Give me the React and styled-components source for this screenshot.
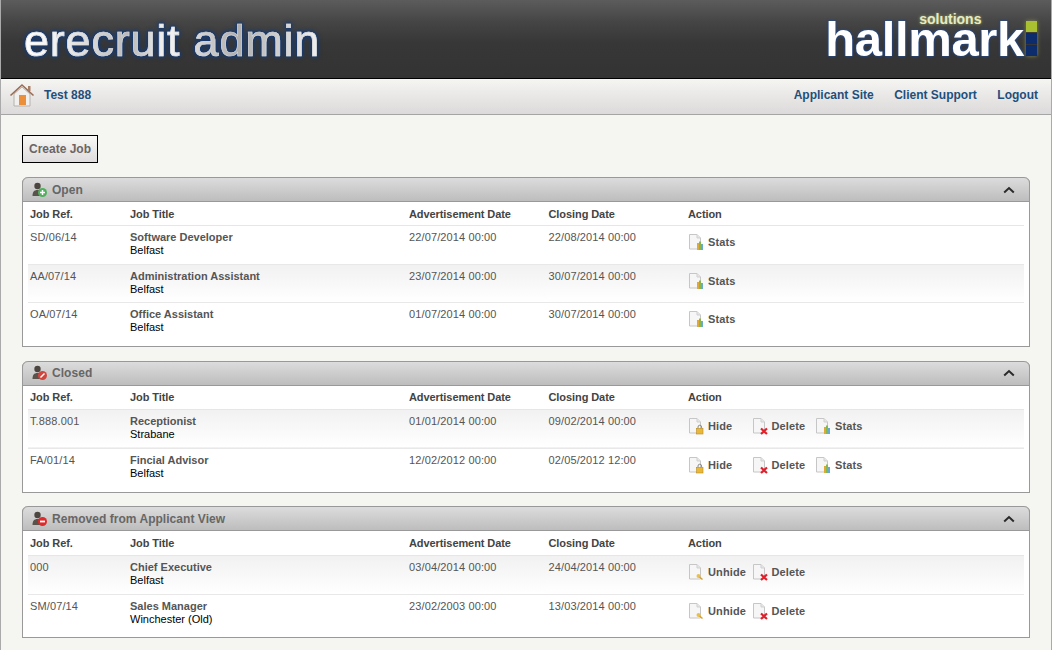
import React from "react";
import styled, { createGlobalStyle } from "styled-components";

const Global = createGlobalStyle`
  html, body { margin: 0; padding: 0; background: #f5f5f1; }
  body { font-family: "Liberation Sans", Arial, sans-serif; font-size: 11px; color: #555; overflow: hidden; }
`;

const Page = styled.div`
  width: 1052px;
  height: 650px;
  box-sizing: border-box;
  border-left: 1px solid #aaa;
  border-right: 1px solid #aaa;
  overflow: hidden;
`;

const Header = styled.header`
  height: 78px;
  display: flex;
  justify-content: space-between;
  align-items: flex-start;
  background: linear-gradient(#5c5c5c 0%, #454545 28%, #373737 55%, #333 100%);
  border-bottom: 1px solid #000;
  padding: 0 14px 0 23px;
`;

const Title = styled.h1`
  margin: 15px 0 0;
  font-size: 45px;
  line-height: 51px;
  font-weight: 400;
  letter-spacing: 0.78px;
  white-space: nowrap;
  background: linear-gradient(90deg, #fff 0%, #ececec 14%, #b8b8b8 36%, #f6f6f6 48%, #aeaeae 72%, #f0f0f0 100%);
  -webkit-background-clip: text;
  background-clip: text;
  -webkit-text-fill-color: transparent;
  -webkit-text-stroke: 0.7px rgba(220, 220, 220, 0.8);
  filter: drop-shadow(0 0 2px #123a78) drop-shadow(0 0 1px #123a78);
`;

const Logo = styled.div`
  position: relative;
  display: flex;
  align-items: flex-start;
  gap: 2px;
  margin-top: 21px;
`;

const LogoWord = styled.span`
  font-size: 49px;
  line-height: 37px;
  font-weight: 700;
  color: #fff;
  letter-spacing: -0.35px;
  text-shadow: 0 0 3px #1f4d9c, 0 0 2px #1f4d9c;
`;

const LogoSub = styled.span`
  position: absolute;
  left: 94px;
  top: -10px;
  font-size: 14px;
  line-height: 16px;
  font-weight: 700;
  color: #e6ebc6;
  text-shadow: 0 0 3px #a8b060;
`;

const LogoBlocks = styled.div`
  display: flex;
  flex-direction: column;
  gap: 1px;
  box-shadow: 0 0 4px #8a8a50;
`;

const LogoBlock = styled.div`
  width: 11px;
  height: 11px;
  background: ${(props) => props.color};
`;

const Nav = styled.nav`
  height: 32px;
  display: flex;
  align-items: center;
  justify-content: space-between;
  background: linear-gradient(#f5f5f2, #dcdada);
  border-bottom: 1px solid #a5a5a5;
  padding: 0 13px 3px 8px;
`;

const NavGroup = styled.div`
  display: flex;
  align-items: center;
  gap: ${(props) => props.gap}px;
`;

const NavLink = styled.a`
  font-size: 12px;
  font-weight: 700;
  color: #1f4f7c;
  text-decoration: none;
`;

const Main = styled.main`
  padding: 20px 21px 0;
  display: flex;
  flex-direction: column;
  align-items: flex-start;
`;

const CreateButton = styled.button`
  width: 76px;
  height: 28px;
  padding: 0;
  margin-bottom: 14px;
  border: 1px solid #000;
  background: linear-gradient(#f8f8f6, #dedcdc);
  font-family: inherit;
  font-size: 12px;
  font-weight: 700;
  color: #6c6464;
`;

const Panel = styled.section`
  width: 1008px;
  box-sizing: border-box;
  margin-bottom: ${(props) => props.gap}px;
  background: #fff;
  border: 1px solid #999;
  border-top: 0;
  border-radius: 6px 6px 0 0;
`;

const PanelHead = styled.div`
  height: 25px;
  box-sizing: border-box;
  display: flex;
  align-items: center;
  justify-content: space-between;
  padding: 0 14px 0 8px;
  margin: 0 -1px;
  border: 1px solid #999;
  border-radius: 6px 6px 0 0;
  background: linear-gradient(#dcdcdc, #bdbdbd);
`;

const PanelTitle = styled.div`
  display: flex;
  align-items: center;
  gap: 4px;
  font-size: 12px;
  font-weight: 700;
  letter-spacing: 0.04px;
  color: #666;
`;

const Table = styled.table`
  width: 996px;
  margin: 0 5px;
  border-collapse: collapse;
  table-layout: fixed;
`;

const Th = styled.th`
  height: ${(props) => props.h}px;
  padding: 0 0 0 2px;
  text-align: left;
  vertical-align: middle;
  font-size: 11px;
  font-weight: 700;
  letter-spacing: -0.08px;
  color: #444;
  border-bottom: 1px solid #e6e6e6;
`;

const Row = styled.tr`
  height: ${(props) => props.h}px;
  background: ${(props) => props.shaded ? "linear-gradient(#f1f1f1, #fff)" : "#fff"};
  border-bottom: ${(props) => props.last ? "0" : "1px solid #e8e8e8"};
`;

const Td = styled.td`
  padding: 5px 0 0 2px;
  vertical-align: top;
  font-size: 11px;
  line-height: 13px;
  letter-spacing: 0.12px;
  color: #555;
`;

const JobName = styled.div`
  font-weight: 700;
  letter-spacing: 0;
  color: #555;
`;

const JobPlace = styled.div`
  letter-spacing: 0;
  color: #000;
`;

const Actions = styled.div`
  display: flex;
  margin-top: 3px;
`;

const Action = styled.a`
  display: flex;
  align-items: center;
  gap: 3px;
  width: 63.5px;
  flex: none;
  font-weight: 700;
  color: #555;
`;

const BottomPad = styled.div`
  height: ${(props) => props.h}px;
`;

const HomeIcon = () => (
  <svg width="26" height="24" viewBox="0 0 26 24">
    <path d="M5 11v12h16V11L13 4z" fill="#f1f0ee" stroke="#b5b2ae" />
    <rect x="10" y="12" width="7" height="10" fill="#ec8f3a" />
    <path d="M1.5 12.5 13 2l11.5 10.5" fill="none" stroke="#9a6a52" strokeWidth="1.6" />
    <rect x="19" y="3" width="2.5" height="5" fill="#a97c66" />
  </svg>
);

const Person = () => (
  <g>
    <circle cx="6.5" cy="4" r="3.2" fill="#4d4640" />
    <path d="M1.5 14c0-4 1.5-6 5-6s5 2 5 6z" fill="#5a534c" />
  </g>
);

const StatusIcon = ({ kind }) => (
  <svg width="17" height="16" viewBox="0 0 17 16">
    <Person />
    {kind === "open" && (
      <>
        <circle cx="11.5" cy="10.5" r="4.5" fill="#4fb05c" />
        <path d="M11.5 8v5M9 10.5h5" stroke="#fff" strokeWidth="1.5" />
      </>
    )}
    {kind === "closed" && (
      <>
        <circle cx="11.5" cy="10.5" r="4.5" fill="#d0463e" />
        <path d="M9.5 12.5l4-4" stroke="#fff" strokeWidth="1.5" />
      </>
    )}
    {kind === "removed" && (
      <>
        <circle cx="11.5" cy="10.5" r="4.5" fill="#dd2a2a" />
        <path d="M9 10.5h5" stroke="#fff" strokeWidth="1.8" />
      </>
    )}
  </svg>
);

const Chevron = () => (
  <svg width="12" height="8" viewBox="0 0 12 8">
    <path d="M1.2 6.5 6 2l4.8 4.5" fill="none" stroke="#2a2a2a" strokeWidth="2" />
  </svg>
);

const DocIcon = ({ kind }) => (
  <svg width="17" height="17" viewBox="0 0 17 17">
    <path d="M1.5.5h7.5l3.5 3.5v11h-11z" fill="#f6f6f6" stroke="#c6c6c6" />
    <path d="M9 .5v3.5h3.5" fill="#e6e6e6" stroke="#cfcfcf" />
    {kind === "stats" && (
      <>
        <rect x="9" y="9" width="2" height="7" fill="#e0a838" />
        <rect x="11" y="7.5" width="2" height="8.5" fill="#86b850" />
        <rect x="13" y="10" width="2" height="6" fill="#68a8d4" />
      </>
    )}
    {kind === "hide" && (
      <>
        <path d="M10 10.5V9a1.8 1.8 0 0 1 3.6 0v1.5" fill="none" stroke="#8a8a8a" />
        <rect x="8.5" y="10.5" width="6.5" height="5.5" fill="#eab838" stroke="#b88a20" strokeWidth=".6" />
      </>
    )}
    {kind === "unhide" && (
      <>
        <circle cx="10.5" cy="12" r="2" fill="#e8c050" />
        <path d="M11.5 13l3 2.5" stroke="#d8a030" strokeWidth="1.6" />
      </>
    )}
    {kind === "delete" && (
      <path d="M9 10.5l6 5.5M15 10.5l-6 5.5" stroke="#e0202a" strokeWidth="2.2" />
    )}
  </svg>
);

const ACTION_LABELS = { stats: "Stats", hide: "Hide", delete: "Delete", unhide: "Unhide" };

const sections = [
  {
    title: "Open", kind: "open", gap: 14, pad: 4, headH: 23,
    jobs: [
      { ref: "SD/06/14", name: "Software Developer", place: "Belfast", adv: "22/07/2014 00:00", close: "22/08/2014 00:00", actions: ["stats"], h: 39 },
      { ref: "AA/07/14", name: "Administration Assistant", place: "Belfast", adv: "23/07/2014 00:00", close: "30/07/2014 00:00", actions: ["stats"], shaded: true, h: 38 },
      { ref: "OA/07/14", name: "Office Assistant", place: "Belfast", adv: "01/07/2014 00:00", close: "30/07/2014 00:00", actions: ["stats"], h: 39 },
    ],
  },
  {
    title: "Closed", kind: "closed", gap: 13, pad: 5, headH: 23,
    jobs: [
      { ref: "T.888.001", name: "Receptionist", place: "Strabane", adv: "01/01/2014 00:00", close: "09/02/2014 00:00", actions: ["hide", "delete", "stats"], shaded: true, h: 39 },
      { ref: "FA/01/14", name: "Fincial Advisor", place: "Belfast", adv: "12/02/2012 00:00", close: "02/05/2012 12:00", actions: ["hide", "delete", "stats"], h: 39 },
    ],
  },
  {
    title: "Removed from Applicant View", kind: "removed", gap: 0, pad: 3, headH: 24,
    jobs: [
      { ref: "000", name: "Chief Executive", place: "Belfast", adv: "03/04/2014 00:00", close: "24/04/2014 00:00", actions: ["unhide", "delete"], shaded: true, h: 39 },
      { ref: "SM/07/14", name: "Sales Manager", place: "Winchester (Old)", adv: "23/02/2003 00:00", close: "13/03/2014 00:00", actions: ["unhide", "delete"], h: 39 },
    ],
  },
];

export default function App() {
  return (
    <Page>
      <Global />
      <Header>
        <Title>erecruit admin</Title>
        <Logo>
          <LogoSub>solutions</LogoSub>
          <LogoWord>hallmark</LogoWord>
          <LogoBlocks>
            <LogoBlock color="#a9c131" />
            <LogoBlock color="#0d2c6c" />
            <LogoBlock color="#0d2c6c" />
          </LogoBlocks>
        </Logo>
      </Header>
      <Nav>
        <NavGroup gap={9}>
          <HomeIcon />
          <NavLink>Test 888</NavLink>
        </NavGroup>
        <NavGroup gap={20.5}>
          <NavLink>Applicant Site</NavLink>
          <NavLink>Client Support</NavLink>
          <NavLink>Logout</NavLink>
        </NavGroup>
      </Nav>
      <Main>
        <CreateButton>Create Job</CreateButton>
        {sections.map((section) => (
          <Panel key={section.title} gap={section.gap}>
            <PanelHead>
              <PanelTitle>
                <StatusIcon kind={section.kind} />
                {section.title}
              </PanelTitle>
              <Chevron />
            </PanelHead>
            <Table>
              <colgroup>
                <col width="100" />
                <col width="279" />
                <col width="139.5" />
                <col width="139.5" />
                <col />
              </colgroup>
              <thead>
                <tr>
                  <Th h={section.headH}>Job Ref.</Th>
                  <Th h={section.headH}>Job Title</Th>
                  <Th h={section.headH}>Advertisement Date</Th>
                  <Th h={section.headH}>Closing Date</Th>
                  <Th h={section.headH}>Action</Th>
                </tr>
              </thead>
              <tbody>
                {section.jobs.map((job, index) => (
                  <Row key={job.ref} h={job.h} shaded={job.shaded} last={index === section.jobs.length - 1}>
                    <Td>{job.ref}</Td>
                    <Td>
                      <JobName>{job.name}</JobName>
                      <JobPlace>{job.place}</JobPlace>
                    </Td>
                    <Td>{job.adv}</Td>
                    <Td>{job.close}</Td>
                    <Td>
                      <Actions>
                        {job.actions.map((action) => (
                          <Action key={action}>
                            <DocIcon kind={action} />
                            {ACTION_LABELS[action]}
                          </Action>
                        ))}
                      </Actions>
                    </Td>
                  </Row>
                ))}
              </tbody>
            </Table>
            <BottomPad h={section.pad} />
          </Panel>
        ))}
      </Main>
    </Page>
  );
}
